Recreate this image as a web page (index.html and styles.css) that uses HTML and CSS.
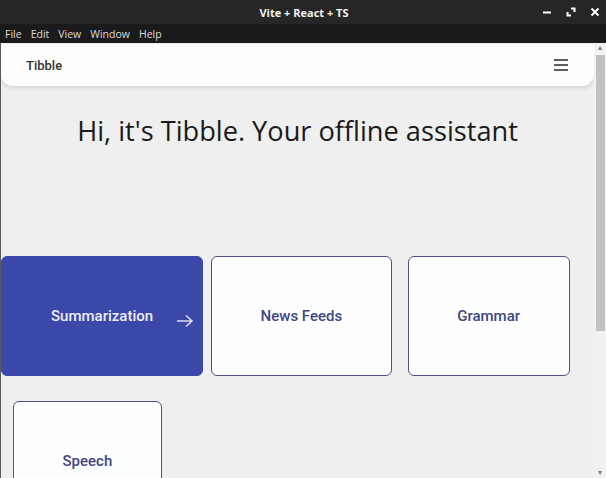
FILE: index.html
```html
<!DOCTYPE html>
<html lang="en">
<head>
<meta charset="utf-8">
<title>Vite + React + TS</title>
<link rel="stylesheet" href="styles.css">
</head>
<body>
<div class="window">
  <header class="titlebar">
    <span></span>
    <span class="title">Vite + React + TS</span>
    <div class="controls">
      <svg class="ctl" width="10" height="10" viewBox="0 0 10 10"><path d="M1 5.5h8" stroke="#fff" stroke-width="2"/></svg>
      <svg class="ctl" width="10" height="10" viewBox="0 0 10 10"><path d="M5 1.5h3.5v3.5M1.5 5v3.5H5" stroke="#fff" stroke-width="2" fill="none"/></svg>
      <svg class="ctl" width="10" height="10" viewBox="0 0 10 10"><path d="M1.5 1.5l7 7M8.5 1.5l-7 7" stroke="#fff" stroke-width="2"/></svg>
    </div>
  </header>
  <nav class="menubar">
    <span>File</span><span>Edit</span><span>View</span><span>Window</span><span>Help</span>
  </nav>
  <div class="viewport">
    <main class="page">
      <div class="navbar">
        <span class="brand">Tibble</span>
        <svg class="burger" width="14" height="12" viewBox="0 0 14 12"><path d="M0 1h14M0 6h14M0 11h14" stroke="#2a2a2a" stroke-width="1.6"/></svg>
      </div>
      <h1 class="greeting">Hi, it's Tibble. Your offline assistant</h1>
      <div class="cards">
        <div class="card active"><span>Summarization</span><svg class="arrow" width="18" height="14" viewBox="0 0 18 14"><path d="M1 7h15M10 1.5L16 7l-6 5.5" stroke="#d9dcf2" stroke-width="1.6" fill="none"/></svg></div>
        <div class="card"><span>News Feeds</span></div>
        <div class="card"><span>Grammar</span></div>
        <div class="card"><span>Speech</span></div>
      </div>
    </main>
    <div class="scrollbar">
      <div class="sb-arrow">&#9652;</div>
      <div class="thumb"></div>
      <div class="sb-track"></div>
      <div class="sb-arrow">&#9662;</div>
    </div>
  </div>
</div>
</body>
</html>
```

FILE: styles.css
```css
* { box-sizing: border-box; }
html, body { margin: 0; padding: 0; }
body {
  width: 606px;
  height: 478px;
  overflow: hidden;
  font-family: "Liberation Sans", Arial, sans-serif;
  background: #1c1c1c;
}
.window {
  display: flex;
  flex-direction: column;
  height: 478px;
}
.titlebar {
  flex-shrink: 0;
  height: 24px;
  background: #262626;
  display: grid;
  grid-template-columns: 1fr auto 1fr;
  align-items: center;
  color: #f2f2f2;
  font-family: "Open Sans", sans-serif;
  font-weight: 700;
  font-size: 11px;
}
.title { padding-left: 2px; }
.controls {
  display: flex;
  justify-content: flex-end;
  gap: 14px;
  padding-right: 6px;
}
.ctl { display: block; }
.menubar {
  flex-shrink: 0;
  height: 19px;
  background: #1b1b1b;
  display: flex;
  align-items: center;
  gap: 9px;
  padding-left: 5px;
  color: #dcdcdc;
  font-family: "Open Sans", sans-serif;
  font-size: 10.5px;
}
.viewport {
  flex: 1;
  display: flex;
  min-height: 0;
}
.page {
  flex: 1;
  background: #efefef;
  border-left: 1px solid #5a5a5a;
  overflow: hidden;
  display: flex;
  flex-direction: column;
}
.page > * { flex-shrink: 0; }
.navbar {
  margin-top: 1px;
  height: 42px;
  background: #fdfdfd;
  border-radius: 0 0 12px 12px;
  box-shadow: 0 2px 4px rgba(0,0,0,0.12);
  display: flex;
  align-items: center;
  justify-content: space-between;
  padding: 0 26px 0 25px;
}
.brand {
  font-family: Roboto, sans-serif;
  font-weight: 500;
  font-size: 13px;
  color: #333;
}
.burger { display: block; }
.greeting {
  margin: 26px 0 0;
  text-align: center;
  font-family: "Open Sans", sans-serif;
  font-weight: 400;
  font-size: 27.2px;
  line-height: 38px;
  color: #1a1a1a;
}
.cards {
  margin-top: 106px;
  display: flex;
  flex-wrap: wrap;
  row-gap: 25px;
  padding-left: 4px;
}
.card {
  height: 120px;
  margin: 0 8px;
  padding: 0 48.5px;
  display: flex;
  align-items: center;
  justify-content: center;
  background: #fdfefe;
  border: 1.5px solid #4d5189;
  border-radius: 6px;
  font-family: Roboto, sans-serif;
  font-weight: 500;
  font-size: 15px;
  color: #3e4683;
}
.card.active {
  margin-left: -4px;
  margin-right: 0;
  background: #3a48a9;
  border-color: #3a48a9;
  color: #eceef8;
  padding: 0 8px 0 49px;
  gap: 23px;
}
.arrow { display: block; margin-top: 9px; }
.scrollbar {
  width: 12px;
  background: #f1f1f1;
  display: flex;
  flex-direction: column;
}
.sb-arrow {
  height: 10px;
  font-size: 8px;
  line-height: 10px;
  color: #7a7a7a;
  text-align: center;
}
.thumb {
  margin: 2px 1px 0 2px;
  height: 276px;
  background: #c1c1c1;
}
.sb-track { flex: 1; }
```
